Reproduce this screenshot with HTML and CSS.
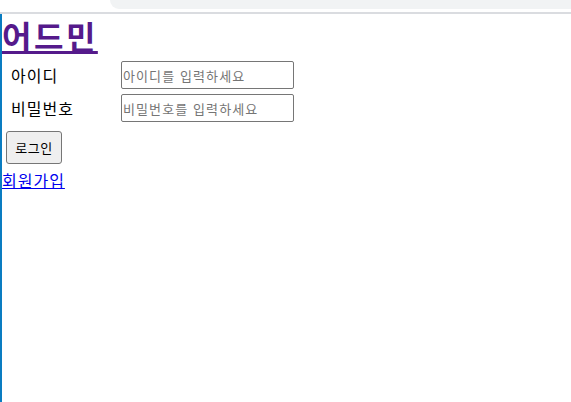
FILE: index.html
```html
<!DOCTYPE html>
<html lang="ko">
<head>
    <meta charset="UTF-8">
    <meta name="viewport" content="width=device-width, initial-scale=1.0">
    <title>어드민</title>
    <link rel="stylesheet" href="styles.css">
</head>
<body>
    <div class="topbar">
        <div class="tabstrip"></div>
    </div>
    <div class="page">
        <h1><a href="#">어드민</a></h1>
        <form class="login-form">
            <label for="user-id">아이디</label>
            <input type="text" id="user-id" placeholder="아이디를 입력하세요">
            <label for="user-pw">비밀번호</label>
            <input type="password" id="user-pw" placeholder="비밀번호를 입력하세요">
        </form>
        <button class="login-btn">로그인</button>
        <a class="join-link" href="#">회원가입</a>
    </div>
</body>
</html>
```

FILE: styles.css
```css
body {
    margin: 0;
    padding: 0;
    font-family: "Noto Sans CJK KR", "Noto Sans", sans-serif;
    background-color: #fff;
    color: #000;
}
.topbar {
    height: 12px;
    border-bottom: 2px solid #dadce0;
    background-color: #fff;
}
.tabstrip {
    margin-left: 110px;
    height: 9px;
    background-color: #f1f3f4;
    border-bottom-left-radius: 14px;
}
.page {
    border-left: 2px solid #0a7cc1;
    min-height: 388px;
    display: flex;
    flex-direction: column;
    align-items: flex-start;
}
h1 {
    margin: 0;
    font-size: 32px;
    font-weight: 700;
    line-height: 42px;
    letter-spacing: 2.5px;
}
h1 a {
    color: #551a8b;
}
.login-form {
    margin-top: 5px;
    display: grid;
    grid-template-columns: 119px 173px;
    row-gap: 5px;
    align-items: center;
}
.login-form label {
    padding-left: 9px;
    font-size: 16px;
    letter-spacing: 1px;
    color: #000;
}
.login-form input {
    box-sizing: border-box;
    width: 173px;
    height: 28px;
    margin: 0;
    padding: 0 1px;
    border: 1px solid #767676;
    border-radius: 2px;
    font-family: "Noto Sans CJK KR", sans-serif;
    font-size: 13px;
    letter-spacing: 1.1px;
}
.login-form input::placeholder {
    color: #757575;
}
.login-btn {
    margin: 9px 0 0 4px;
    width: 56px;
    height: 33px;
    padding: 0;
    background-color: #efefef;
    border: 1px solid #767676;
    border-radius: 3px;
    font-family: "Noto Sans CJK KR", sans-serif;
    font-size: 13px;
    letter-spacing: 0.5px;
    color: #000;
}
.join-link {
    margin-top: 6px;
    font-size: 16px;
    line-height: 20px;
    letter-spacing: 1px;
    color: #0000ee;
}
```
